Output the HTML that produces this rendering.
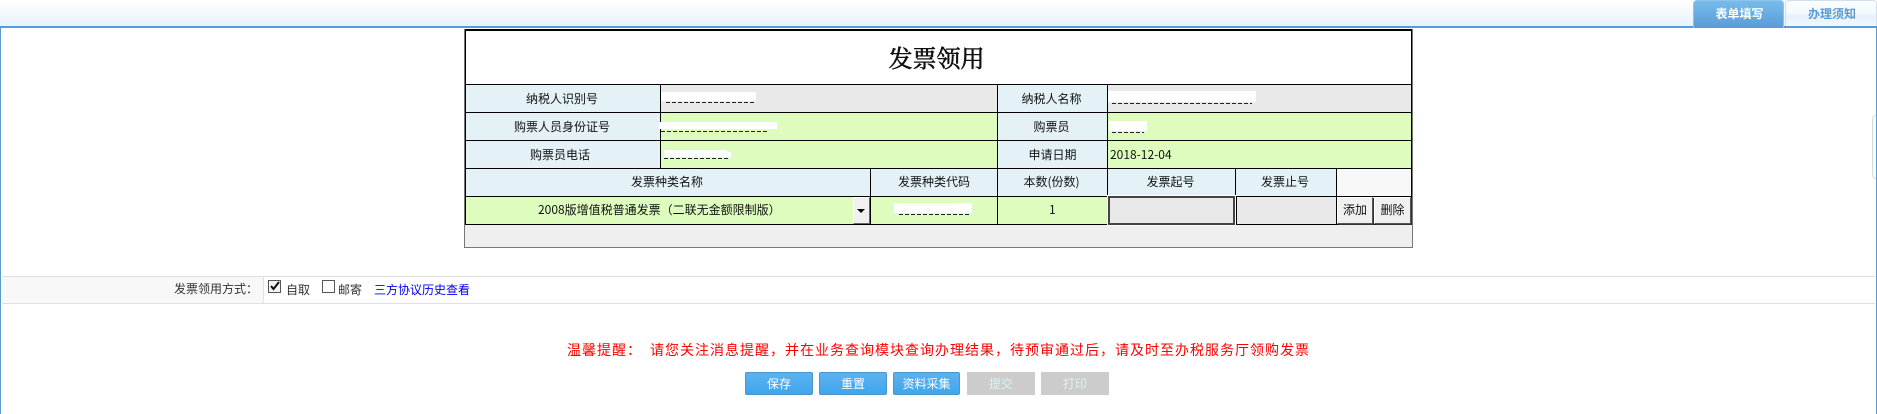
<!DOCTYPE html>
<html lang="zh">
<head>
<meta charset="utf-8">
<title>发票领用</title>
<style>
html,body{margin:0;padding:0;width:1877px;height:414px;overflow:hidden;background:#fff}
body{position:relative;font:12px/14px "WenQuanYi Zen Hei","Noto Sans CJK SC",sans-serif;color:#111}
.a{position:absolute;box-sizing:border-box}
.t{position:absolute;white-space:nowrap;line-height:14px;text-align:center}
.k{background:#000}
.hd{background:#e4f2f8}
.gr{background:#dffcbf}
.gy{background:#e9e9e9}
.w{background:#fff}
.dash{position:absolute;height:1px;background:repeating-linear-gradient(90deg,#222 0 4px,transparent 4px 6px)}
.btn{position:absolute;top:372px;height:23px;box-sizing:border-box;text-align:center;line-height:21px;color:#fff;border:1px solid #4a94cf;border-radius:2px;background:linear-gradient(#5db3ee,#3ea6ee)}
.btn.off{background:#ccc;border-color:#ccc;color:#d6f4f4;border-radius:0}
.mini{position:absolute;top:197px;height:27px;box-sizing:border-box;text-align:center;line-height:24px;background:#f0f0f0;border:1px solid;border-color:#fff #555 #555 #fff;box-shadow:1px 1px 0 #333;font-size:12px}
.cb{position:absolute;width:13px;height:13px;box-sizing:border-box;border:1px solid #555;background:#fff}
</style>
</head>
<body>
<!-- top bar -->
<div class="a" style="left:0;top:0;width:1877px;height:26px;background:linear-gradient(#fff,#e8f3fb)"></div>
<div class="a" style="left:0;top:26px;width:1877px;height:2px;background:#5b9bd5"></div>
<div class="a" style="left:0;top:26px;width:1px;height:388px;background:#5b9bd5"></div>
<div class="a" style="left:1876px;top:26px;width:1px;height:388px;background:#5b9bd5"></div>
<div class="a" style="left:1693px;top:0;width:91px;height:28px;border:1px solid #8ec4ec;border-bottom:0;border-radius:4px 4px 0 0;background:linear-gradient(#78bcec,#5a9bd6)"></div>
<div class="t" style="left:1694px;top:7px;width:91px;color:#fff;font-weight:bold">表单填写</div>
<div class="a" style="left:1785px;top:0;width:92px;height:26px;border:1px solid #d2dfec;border-bottom:0;border-radius:4px 4px 0 0;background:linear-gradient(#fbfdff 0,#f6fafe 45%,#e6f1fc 60%,#f2f7fd 100%)"></div>
<div class="t" style="left:1786px;top:7px;width:92px;color:#5b9bd5;font-weight:bold">办理须知</div>
<div class="a" style="left:1872px;top:115px;width:4px;height:64px;border:1px solid #d0d9e8;border-right:0;border-radius:4px 0 0 4px;background:#fff"></div>

<!-- table frame -->
<div class="a" style="left:464px;top:29px;width:949px;height:219px;background:#efefef;border:1px solid #777;border-top:0"></div>
<div class="a k" style="left:465px;top:29px;width:947px;height:196px"></div>
<div class="a w" style="left:466px;top:31px;width:945px;height:53px"></div>
<div class="t" style="left:466px;top:45px;width:941px;font:24px/24px 'Noto Serif CJK SC',serif;-webkit-text-stroke:.6px #111;color:#111">发票领用</div>

<!-- row 1 -->
<div class="a hd" style="left:466px;top:85px;width:194px;height:27px"></div>
<div class="a gy" style="left:661px;top:85px;width:336px;height:27px"></div>
<div class="a hd" style="left:998px;top:85px;width:109px;height:27px"></div>
<div class="a gy" style="left:1108px;top:85px;width:303px;height:27px"></div>
<!-- row 2 -->
<div class="a hd" style="left:466px;top:113px;width:194px;height:27px"></div>
<div class="a gr" style="left:661px;top:113px;width:336px;height:27px"></div>
<div class="a hd" style="left:998px;top:113px;width:109px;height:27px"></div>
<div class="a gr" style="left:1108px;top:113px;width:303px;height:27px"></div>
<!-- row 3 -->
<div class="a hd" style="left:466px;top:141px;width:194px;height:27px"></div>
<div class="a gr" style="left:661px;top:141px;width:336px;height:27px"></div>
<div class="a hd" style="left:998px;top:141px;width:109px;height:27px"></div>
<div class="a gr" style="left:1108px;top:141px;width:303px;height:27px"></div>
<!-- row 4 -->
<div class="a hd" style="left:466px;top:169px;width:404px;height:27px"></div>
<div class="a hd" style="left:871px;top:169px;width:126px;height:27px"></div>
<div class="a hd" style="left:998px;top:169px;width:109px;height:27px"></div>
<div class="a hd" style="left:1108px;top:169px;width:127px;height:27px"></div>
<div class="a hd" style="left:1236px;top:169px;width:100px;height:27px"></div>
<div class="a" style="left:1337px;top:169px;width:74px;height:27px;background:#f8f8f8"></div>
<!-- row 5 -->
<div class="a gr" style="left:466px;top:197px;width:404px;height:27px"></div>
<div class="a gr" style="left:871px;top:197px;width:126px;height:27px"></div>
<div class="a gr" style="left:998px;top:197px;width:109px;height:27px"></div>
<div class="a" style="left:1107px;top:195px;width:129px;height:31px;background:#fff"></div>
<div class="a" style="left:1108px;top:196px;width:127px;height:29px;background:#e9e9e9;border:2px solid #444"></div>
<div class="a gy" style="left:1237px;top:197px;width:99px;height:27px"></div>
<div class="a" style="left:1337px;top:197px;width:74px;height:27px;background:#efefef"></div>

<!-- labels -->
<div class="t" style="left:465px;top:92px;width:194px">纳税人识别号</div>
<div class="t" style="left:465px;top:120px;width:194px">购票人员身份证号</div>
<div class="t" style="left:463px;top:148px;width:194px">购票员电话</div>
<div class="t" style="left:997px;top:92px;width:109px">纳税人名称</div>
<div class="t" style="left:997px;top:120px;width:109px">购票员</div>
<div class="t" style="left:998px;top:148px;width:109px">申请日期</div>
<div class="t" style="left:1110px;top:148px">2018-12-04</div>
<div class="t" style="left:465px;top:175px;width:404px">发票种类名称</div>
<div class="t" style="left:871px;top:175px;width:126px">发票种类代码</div>
<div class="t" style="left:997px;top:175px;width:109px">本数(份数)</div>
<div class="t" style="left:1108px;top:175px;width:125px">发票起号</div>
<div class="t" style="left:1236px;top:175px;width:98px">发票止号</div>
<div class="t" style="left:538px;top:203px;text-align:left">2008版增值税普通发票（二联无金额限制版）</div>
<div class="t" style="left:1049px;top:203px">1</div>

<!-- select arrow -->
<div class="a" style="left:853px;top:197px;width:17px;height:27px;background:#f0f0f0;border:1px solid;border-color:#fff #666 #666 #fff"></div>
<div class="a" style="left:857px;top:209px;width:0;height:0;border:4px solid transparent;border-top:4px solid #000;border-bottom:0"></div>

<!-- redaction and clipped values -->
<div class="dash" style="left:666px;top:102px;width:88px"></div>
<div class="a w" style="left:661px;top:92px;width:95px;height:9px"></div>
<div class="dash" style="left:661px;top:131px;width:108px"></div>
<div class="a w" style="left:659px;top:122px;width:118px;height:7px"></div>
<div class="dash" style="left:664px;top:158px;width:66px"></div>
<div class="a w" style="left:664px;top:150px;width:63px;height:7px"></div>
<div class="a w" style="left:664px;top:152px;width:67px;height:5px"></div>
<div class="dash" style="left:1112px;top:103px;width:140px"></div>
<div class="a w" style="left:1108px;top:91px;width:148px;height:11px"></div>
<div class="dash" style="left:1112px;top:132px;width:32px"></div>
<div class="a w" style="left:1109px;top:121px;width:38px;height:10px"></div>
<div class="dash" style="left:899px;top:214px;width:70px"></div>
<div class="a w" style="left:894px;top:203px;width:78px;height:10px"></div>

<!-- small buttons -->
<div class="mini" style="left:1337px;width:36px">添加</div>
<div class="mini" style="left:1374px;width:37px">删除</div>

<!-- delivery row -->
<div class="a" style="left:2px;top:276px;width:261px;height:28px;background:#f8f8f8"></div>
<div class="a" style="left:2px;top:276px;width:1873px;height:1px;background:#e0e0e0"></div>
<div class="a" style="left:2px;top:303px;width:1873px;height:1px;background:#e0e0e0"></div>
<div class="a" style="left:263px;top:276px;width:1px;height:28px;background:#e0e0e0"></div>
<div class="t" style="left:100px;top:282px;width:158px;text-align:right;color:#333">发票领用方式：</div>
<div class="cb" style="left:268px;top:280px;background:#f4f4f4"></div>
<svg class="a" style="left:268px;top:280px" width="13" height="13" viewBox="0 0 13 13"><path d="M3 6 L5.5 9 L11 2" fill="none" stroke="#111" stroke-width="2"/></svg>
<div class="t" style="left:286px;top:283px;color:#333">自取</div>
<div class="cb" style="left:322px;top:280px"></div>
<div class="t" style="left:338px;top:283px;color:#333">邮寄</div>
<div class="t" style="left:374px;top:283px;color:#0000f0">三方协议历史查看</div>

<!-- notice -->
<div class="t" style="left:567px;top:342px;font-size:14px;line-height:16px;letter-spacing:1px;color:#f00;text-align:left">温馨提醒：</div>
<div class="t" style="left:650px;top:342px;font-size:14px;line-height:16px;letter-spacing:1px;color:#f00;text-align:left">请您关注消息提醒，并在业务查询模块查询办理结果，待预审通过后，请及时至办税服务厅领购发票</div>

<!-- buttons -->
<div class="btn" style="left:745px;width:68px">保存</div>
<div class="btn" style="left:819px;width:68px">重置</div>
<div class="btn" style="left:893px;width:67px">资料采集</div>
<div class="btn off" style="left:967px;width:68px">提交</div>
<div class="btn off" style="left:1041px;width:68px">打印</div>
</body>
</html>
